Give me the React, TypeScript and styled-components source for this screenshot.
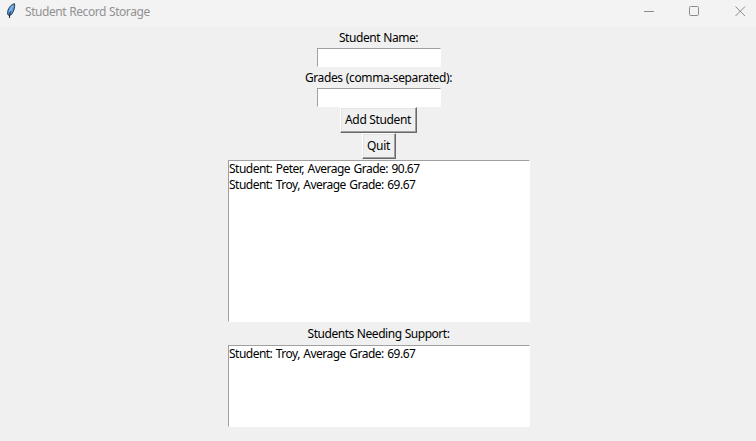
import React from 'react';
import styled, { createGlobalStyle } from 'styled-components';

const GlobalStyle = createGlobalStyle`
  * { box-sizing: border-box; }
  body { margin: 0; background: #f0f0f0; overflow: hidden; }
`;

const Window = styled.main`
  display: flex;
  flex-direction: column;
  width: 756px;
  height: 441px;
  background: #f0f0f0;
  color: #000;
  font: 12px/16px "Noto Sans", "Open Sans", sans-serif;
  white-space: nowrap;
`;

const TitleBar = styled.header`
  display: flex;
  align-items: center;
  height: 27px;
  padding: 0 10px 3px 6px;
  background: #f3f3f3;
  color: #919191;
`;

const Title = styled.h1`
  flex: 1;
  margin: 0 0 0 8px;
  font-size: 12px;
  font-weight: 400;
  letter-spacing: -0.43px;
  word-spacing: 0.3px;
`;

const WindowControls = styled.div`
  display: flex;
  gap: 35px;
  margin-bottom: 1px;
`;

const ControlIcon = styled.svg`
  display: block;
  width: 11px;
  height: 11px;
  fill: none;
  stroke: #8c8c8c;
`;

const FeatherIcon = styled.svg`
  display: block;
  width: 11px;
  height: 18px;
`;

const Form = styled.section`
  display: flex;
  flex-direction: column;
  align-items: center;
  padding-left: 2px;
`;

const Label = styled.label<{ $height: number; $spacing: number }>`
  height: ${p => p.$height}px;
  padding-right: 1px;
  line-height: ${p => p.$height}px;
  letter-spacing: ${p => p.$spacing}px;
  word-spacing: 0.4px;
`;

const Entry = styled.input`
  width: 124px;
  height: 19px;
  padding: 0 2px;
  border: 1px solid;
  border-color: #a0a0a0 #fff #fff #a0a0a0;
  border-radius: 0;
  background: #fff;
  font: inherit;
  outline: none;
`;

const Button = styled.button<{ $width: number; $nudge?: number }>`
  width: ${p => p.$width}px;
  height: 26px;
  margin-right: ${p => p.$nudge ?? 0}px;
  padding: 0 1px 0 0;
  border: 1px solid;
  border-color: #fff #696969 #696969 #fff;
  border-radius: 0;
  background: #f0f0f0;
  box-shadow: inset -1px -1px #a0a0a0, inset 1px 1px #e3e3e3;
  color: #000;
  font: inherit;
  letter-spacing: -0.35px;
`;

const ListBox = styled.ul<{ $height: number; $top: number }>`
  width: 302px;
  height: ${p => p.$height}px;
  margin: ${p => p.$top}px 0 0;
  padding: 0;
  border: 1px solid;
  border-color: #a0a0a0 #fff #fff #a0a0a0;
  background: #fff;
  list-style: none;
`;

const Item = styled.li`
  height: 16px;
  line-height: 16px;
  letter-spacing: -0.52px;
  word-spacing: 0.9px;
`;

export default function App() {
  return (
    <>
      <GlobalStyle />
      <Window>
        <TitleBar>
          <FeatherIcon viewBox="0 0 11 18">
            <path d="M8.6 .7C5.5 1.2 2.5 4.5 1.7 8.5V11.5L3 12.5L5.5 11.5C8 8 9 4.5 8.6 .7Z" fill="#5b9ade" stroke="#1a2a42" strokeWidth=".9" />
            <path d="M4.3 8L3.4 15" fill="none" stroke="#111d30" />
            <path d="M6.8 3L3.3 9" stroke="#8fc0f2" strokeWidth="1.2" />
          </FeatherIcon>
          <Title>Student Record Storage</Title>
          <WindowControls>
            <ControlIcon viewBox="0 0 11 11"><path d="M1 5.5H11" /></ControlIcon>
            <ControlIcon viewBox="0 0 11 11"><rect x=".5" y=".5" width="9" height="9" rx="1" /></ControlIcon>
            <ControlIcon viewBox="0 0 11 11"><path d="M.5.5L10 10M10 .5L.5 10" /></ControlIcon>
          </WindowControls>
        </TitleBar>
        <Form>
          <Label htmlFor="name" $height={21} $spacing={-0.43}>Student Name:</Label>
          <Entry id="name" />
          <Label htmlFor="grades" $height={21} $spacing={-0.38}>Grades (comma-separated):</Label>
          <Entry id="grades" />
          <Button $width={77} $nudge={1}>Add Student</Button>
          <Button $width={34}>Quit</Button>
          <ListBox $height={162} $top={1}>
            <Item>Student: Peter, Average Grade: 90.67</Item>
            <Item>Student: Troy, Average Grade: 69.67</Item>
          </ListBox>
          <Label as="div" $height={23} $spacing={-0.46}>Students Needing Support:</Label>
          <ListBox $height={82} $top={0}>
            <Item>Student: Troy, Average Grade: 69.67</Item>
          </ListBox>
        </Form>
      </Window>
    </>
  );
}
